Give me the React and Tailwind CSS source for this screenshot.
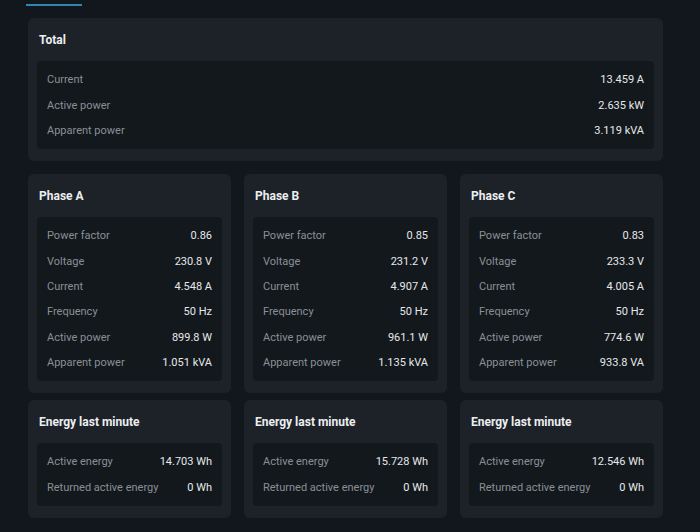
import React from 'react';

const total = [
  ['Current', '13.459 A'],
  ['Active power', '2.635 kW'],
  ['Apparent power', '3.119 kVA'],
];

const phases = [
  {
    name: 'Phase A',
    rows: [
      ['Power factor', '0.86'],
      ['Voltage', '230.8 V'],
      ['Current', '4.548 A'],
      ['Frequency', '50 Hz'],
      ['Active power', '899.8 W'],
      ['Apparent power', '1.051 kVA'],
    ],
    energy: [
      ['Active energy', '14.703 Wh'],
      ['Returned active energy', '0 Wh'],
    ],
  },
  {
    name: 'Phase B',
    rows: [
      ['Power factor', '0.85'],
      ['Voltage', '231.2 V'],
      ['Current', '4.907 A'],
      ['Frequency', '50 Hz'],
      ['Active power', '961.1 W'],
      ['Apparent power', '1.135 kVA'],
    ],
    energy: [
      ['Active energy', '15.728 Wh'],
      ['Returned active energy', '0 Wh'],
    ],
  },
  {
    name: 'Phase C',
    rows: [
      ['Power factor', '0.83'],
      ['Voltage', '233.3 V'],
      ['Current', '4.005 A'],
      ['Frequency', '50 Hz'],
      ['Active power', '774.6 W'],
      ['Apparent power', '933.8 VA'],
    ],
    energy: [
      ['Active energy', '12.546 Wh'],
      ['Returned active energy', '0 Wh'],
    ],
  },
];

const Card = ({ title, rows }) => (
  <div className="bg-[#1d2228] rounded-[6px] px-[9px] pt-[14px] pb-[12px]">
    <h3 className="h-[16px] leading-[16px] text-[12px] font-bold text-[#eceef0] pl-[2px] mb-[13px]">{title}</h3>
    <div className="bg-[#13181d] rounded-[4px] px-[10px] pt-[7px] pb-[5px]">
      {rows.map(([label, value]) => (
        <div key={label} className="h-[25.33px] flex items-center justify-between text-[11px]">
          <span className="text-[#8a8f96]">{label}</span>
          <span className="text-[#e6e8eb]">{value}</span>
        </div>
      ))}
    </div>
  </div>
);

export default function App() {
  return (
    <div className="w-[700px] h-[532px] overflow-hidden bg-[#12171d] pl-[28px] pr-[37px] font-['Roboto','Liberation_Sans',sans-serif]">
      <div className="w-[56px] h-[2px] bg-[#2e87b1] mt-[4px] -ml-[2px]" />
      <div className="mt-[12px]">
        <Card title="Total" rows={total} />
      </div>
      <div className="grid grid-cols-3 gap-x-[13px] mt-[13px]">
        {phases.map(p => <Card key={p.name} title={p.name} rows={p.rows} />)}
      </div>
      <div className="grid grid-cols-3 gap-x-[13px] mt-[7px]">
        {phases.map(p => <Card key={p.name} title="Energy last minute" rows={p.energy} />)}
      </div>
    </div>
  );
}
